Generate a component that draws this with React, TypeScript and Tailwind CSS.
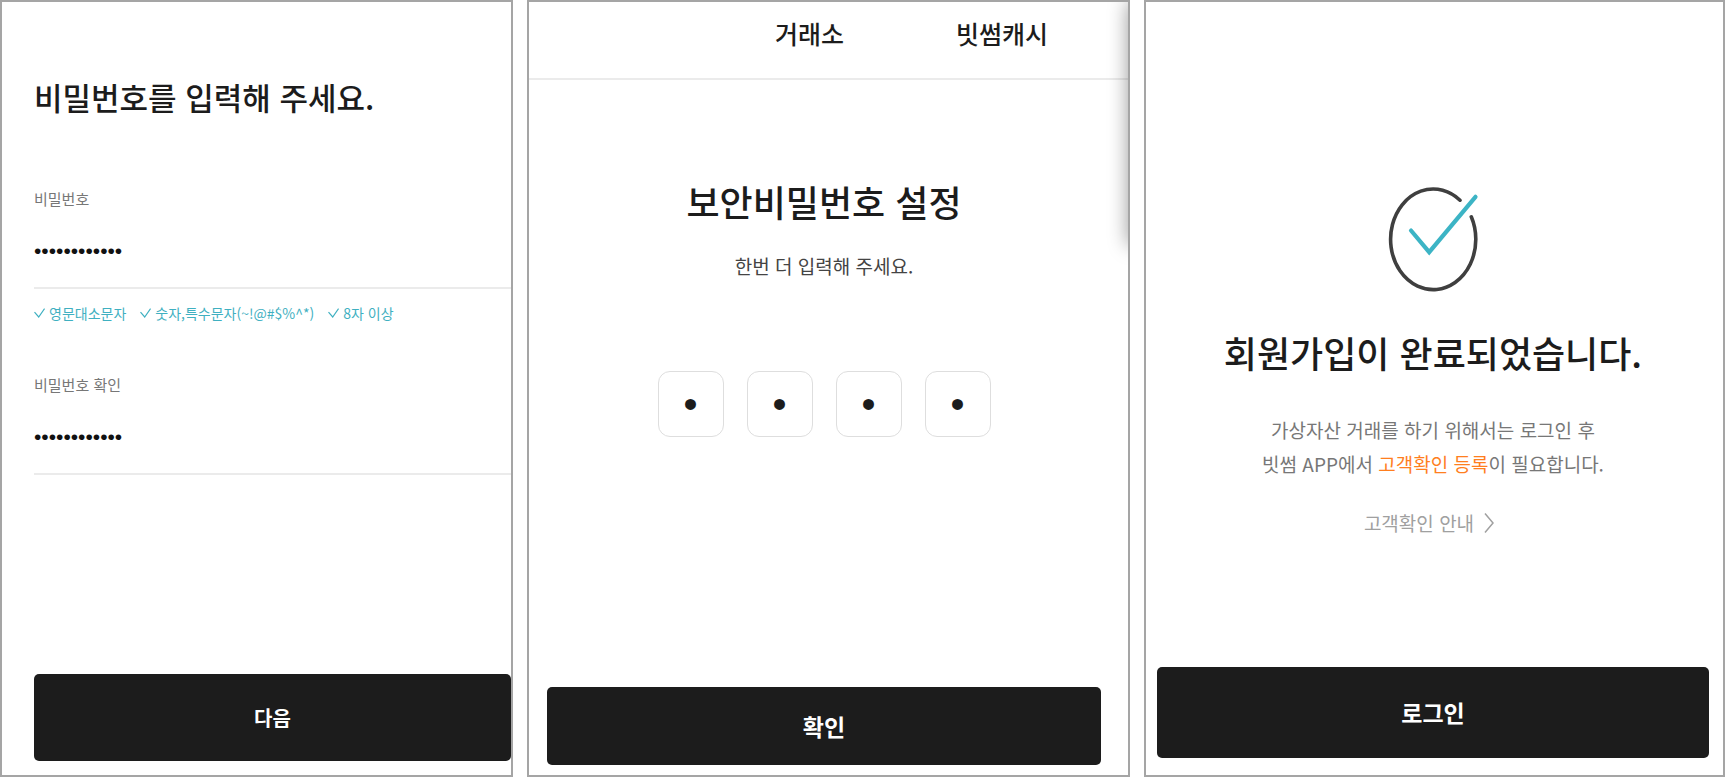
import React from 'react';
import { clsx } from 'clsx';

interface PanelProps {
    className?: string;
    children: React.ReactNode;
}

function Panel({ className, children }: PanelProps) {
    return (
        <section className={clsx('relative flex min-w-0 flex-col overflow-hidden border-2 border-[#a5a5a5] bg-white', className)}>
            {children}
        </section>
    );
}

interface SubmitButtonProps {
    className?: string;
    children: React.ReactNode;
}

function SubmitButton({ className, children }: SubmitButtonProps) {
    return (
        <button type="submit" className={clsx('mt-auto w-full shrink-0 rounded-[5px] bg-[#1c1c1c] font-bold text-white', className)}>
            {children}
        </button>
    );
}

interface PasswordFieldProps {
    id: string;
    label: string;
}

function PasswordField({ id, label }: PasswordFieldProps) {
    return (
        <div className="flex flex-col border-b-2 border-[#ebebeb]">
            <label htmlFor={id} className="text-[15px] leading-6 text-[#777777]">
                {label}
            </label>
            <input
                id={id}
                type="password"
                defaultValue="abcdEFGH12!@"
                className="mt-6 mb-5 h-8 w-full bg-transparent font-['Liberation_Sans',sans-serif] text-[21px] text-[#111111] outline-none"
            />
        </div>
    );
}

const RULES = ['영문대소문자', '숫자,특수문자(~!@#$%^*)', '8자 이상'];

function PasswordPanel() {
    return (
        <Panel className="pt-[70px] pb-[14px] pl-8">
            <form className="flex flex-1 flex-col">
                <h1 className="text-[31px] leading-[50px] font-medium text-[#1c1c1c]">비밀번호를 입력해 주세요.</h1>
                <div className="mt-[65px]">
                    <PasswordField id="password" label="비밀번호" />
                </div>
                <ul className="mt-3 flex gap-[14px] text-sm leading-6 text-[#3fb0c1]">
                    {RULES.map((rule) => (
                        <li key={rule} className="flex items-center gap-1 whitespace-nowrap">
                            <svg viewBox="0 0 11 10" className="h-[10px] w-[11px]" fill="none" stroke="currentColor" strokeWidth="1.2">
                                <path d="M0.5 4.2 4.7 9 10.6 0.6" />
                            </svg>
                            {rule}
                        </li>
                    ))}
                </ul>
                <div className="mt-12">
                    <PasswordField id="password-confirm" label="비밀번호 확인" />
                </div>
                <SubmitButton className="h-[87px] text-xl">다음</SubmitButton>
            </form>
        </Panel>
    );
}

function PinPanel() {
    return (
        <Panel>
            <nav className="flex h-[78px] shrink-0 justify-end gap-28 border-b-2 border-[#ebebeb] pt-[11px] pr-20 text-[25px] leading-10 font-medium text-[#1c1c1c]">
                <a href="#exchange">거래소</a>
                <a href="#cash">빗썸캐시</a>
            </nav>
            <form className="flex flex-1 flex-col items-center pt-24 pr-[27px] pb-[10px] pl-[18px]">
                <h1 className="text-4xl leading-[50px] font-medium text-[#1c1c1c]">보안비밀번호 설정</h1>
                <p className="mt-6 text-[19px] leading-8 text-[#444444]">한번 더 입력해 주세요.</p>
                <div className="mt-[89px] flex gap-[23px]">
                    {[1, 2, 3, 4].map((n) => (
                        <input
                            key={n}
                            type="password"
                            aria-label={`보안비밀번호 ${n}`}
                            maxLength={1}
                            defaultValue="0"
                            className="size-[66px] rounded-xl border border-[#dedede] bg-white text-center font-['Liberation_Sans',sans-serif] text-[40px] text-[#1c1c1c] outline-none"
                        />
                    ))}
                </div>
                <SubmitButton className="h-[78px] text-[23px]">확인</SubmitButton>
            </form>
            {/* Shadow cast by the drawer beyond the right edge */}
            <div className="pointer-events-none absolute top-0 -right-10 h-[243px] w-10 shadow-[0_0_20px_rgba(0,0,0,0.4)]" />
        </Panel>
    );
}

function CompletePanel() {
    return (
        <Panel className="items-center pt-[183px] pr-[14px] pb-[17px] pl-[11px]">
            <svg viewBox="0 0 92 108" className="h-[108px] w-[92px] shrink-0" fill="none" strokeLinecap="round">
                <path d="M73 15.2A42.6 50.3 0 1 0 84.3 31.8" stroke="#3f3f3f" strokeWidth="3.6" />
                <path d="M24 45.5 42.2 67.2 88.5 11.8" stroke="#3cb4c5" strokeWidth="4.2" />
            </svg>
            <h1 className="mt-[34px] text-4xl leading-[50px] font-medium whitespace-nowrap text-[#1c1c1c]">회원가입이 완료되었습니다.</h1>
            <p className="mt-9 text-center text-[19px] leading-[34px] text-[#777777]">
                가상자산 거래를 하기 위해서는 로그인 후<br />
                빗썸 APP에서 <span className="text-[#ff7f1f]">고객확인 등록</span>이 필요합니다.
            </p>
            <a href="#guide" className="mt-[26px] flex items-center gap-[10px] pr-2 text-[19px] leading-8 text-[#a0a0a0]">
                고객확인 안내
                <svg viewBox="0 0 10 20" className="h-5 w-[10px]" fill="none" stroke="currentColor" strokeWidth="1.5">
                    <path d="M1 0.6 9 10 1 19.4" />
                </svg>
            </a>
            <SubmitButton className="h-[91px] text-[23px]">로그인</SubmitButton>
        </Panel>
    );
}

export default function App() {
    return (
        <main
            lang="ko"
            className="grid min-h-screen grid-cols-[513fr_603fr_581fr] gap-[14px] bg-white font-['Noto_Sans_CJK_KR',sans-serif]"
        >
            <PasswordPanel />
            <PinPanel />
            <CompletePanel />
        </main>
    );
}
